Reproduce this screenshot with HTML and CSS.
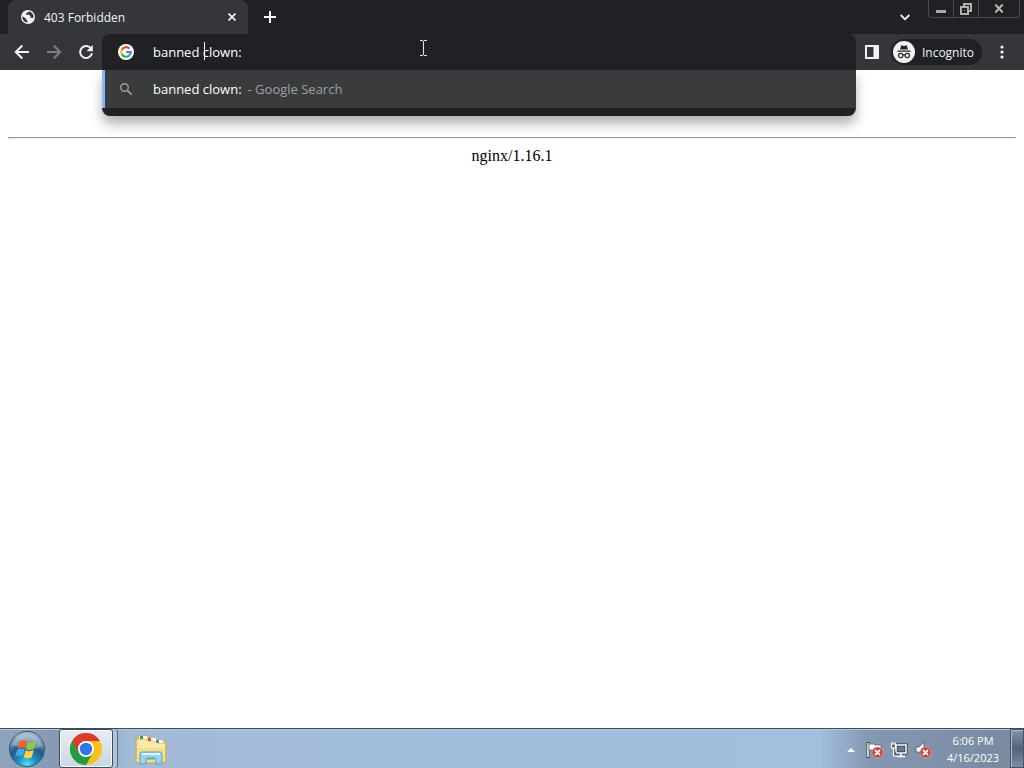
FILE: index.html
```html
<!DOCTYPE html>
<html lang="en">
<head>
    <meta charset="UTF-8" />
    <meta name="viewport" content="width=device-width, initial-scale=1" />
    <title>403 Forbidden</title>
    <link rel="stylesheet" href="styles.css">
</head>
<body>

    <!-- Tab strip -->
    <header class="tab-strip">
        <div class="tab">
            <svg class="tab-icon" width="14" height="14" viewBox="0 0 14 14" aria-hidden="true">
                <circle cx="7" cy="7" r="7" fill="#f1f3f4"/>
                <path d="M1.3 6.3 5 8.6v1l1.4.8v2.2C3.200 12.400 1.200 9.500 1.300 6.300zM7.800 1.500 6.500 2.700 5 3.200v1.500h3.200l1.200 1.500v1.500h1.800l1.200.6C13.300 5 11 1.900 7.800 1.500z" fill="#35363a"/>
            </svg>
            <span class="tab-title">403 Forbidden</span>
            <button class="tab-close" aria-label="Close tab">
                <svg width="8" height="8" viewBox="0 0 8 8"><path d="M.5.5l7 7M7.500.5l-7 7" stroke="#f1f3f4" stroke-width="1.600"/></svg>
            </button>
        </div>
        <button class="new-tab" aria-label="New tab">
            <svg width="12" height="12" viewBox="0 0 12 12"><path d="M6 0v12M0 6h12" stroke="#fff" stroke-width="2"/></svg>
        </button>
        <button class="tab-search" aria-label="Search tabs">
            <svg width="10" height="7" viewBox="0 0 10 7"><path d="M.7 1l4.300 4.300L9.300 1" fill="none" stroke="#f1f3f4" stroke-width="1.800"/></svg>
        </button>
        <div class="window-buttons">
            <button aria-label="Minimize">
                <svg width="10" height="10" viewBox="0 0 10 10"><path d="M0 6h10v3H0z" fill="#aaa"/></svg>
            </button>
            <button aria-label="Restore">
                <svg width="12" height="12" viewBox="0 0 12 12" fill="none" stroke="#b0b0b0"><path d="M4 3V1h7v7H9" stroke-width="2"/><path d="M1 4h7v7H1z" stroke-width="2"/><path d="M4 7h1v1H4z" fill="#b0b0b0" stroke="none"/></svg>
            </button>
            <button class="window-close" aria-label="Close">
                <svg width="10" height="9" viewBox="0 0 10 9"><path d="M1.300.5l7.400 8M8.700.5l-7.400 8" stroke="#b8b8b8" stroke-width="2"/></svg>
            </button>
        </div>
    </header>

    <!-- Toolbar with address bar -->
    <nav class="toolbar">
        <button class="nav-button" aria-label="Back">
            <svg width="16" height="16" viewBox="0 0 16 16" fill="none" stroke="#f1f3f4" stroke-width="2"><path d="M15 8H2.500M8.300 1.500L1.800 8l6.500 6.500"/></svg>
        </button>
        <button class="nav-button" aria-label="Forward">
            <svg width="16" height="16" viewBox="0 0 16 16" fill="none" stroke="#7d7e81" stroke-width="2"><path d="M1 8h12.500M7.700 1.500L14.200 8l-6.500 6.500"/></svg>
        </button>
        <button class="nav-button" aria-label="Reload">
            <svg width="16" height="16" viewBox="0 0 16 16"><path d="M13.200 4.800A6 6 0 1 0 14 9.300" fill="none" stroke="#f1f3f4" stroke-width="2"/><path d="M14.800 1v6.300H8.500z" fill="#f1f3f4"/></svg>
        </button>

        <div class="omnibox">
            <div class="omnibox-row">
                <svg width="16" height="16" viewBox="0 0 16 16" aria-hidden="true">
                    <circle cx="8" cy="8" r="8" fill="#fff"/>
                    <g fill="none" stroke-width="2.200">
                        <path d="M11.400 4.600A4.800 4.800 0 0 0 3.800 5.700" stroke="#ea4335"/>
                        <path d="M3.800 5.700a4.800 4.800 0 0 0 0 4.600" stroke="#fbbc05"/>
                        <path d="M3.800 10.300a4.800 4.800 0 0 0 7.400 1.200" stroke="#34a853"/>
                        <path d="M11.200 11.500A4.800 4.800 0 0 0 12.700 8H8.200" stroke="#4285f4"/>
                    </g>
                </svg>
                <input type="text" class="omnibox-input" value="banned clown:" aria-label="Address and search bar" />
                <span class="caret"></span>
                <svg class="pointer" width="7" height="16" viewBox="0 0 7 16" aria-hidden="true"><path d="M0 .5h3M4 .5h3M0 15.500h3M4 15.500h3M3.500 1v14" fill="none" stroke="#e4e4e4"/></svg>
            </div>
            <div class="suggestions">
                <a class="suggestion" href="#">
                    <svg width="16" height="16" viewBox="0 0 16 16" fill="none" stroke="#9aa0a6" aria-hidden="true"><circle cx="6.500" cy="6.500" r="3.800" stroke-width="1.400"/><path d="M9.300 9.300l4.400 4.400" stroke-width="1.700"/></svg>
                    <span class="suggestion-text">banned clown:</span>
                    <span class="suggestion-source">- Google Search</span>
                </a>
            </div>
        </div>

        <button class="side-panel" aria-label="Side panel">
            <svg width="14" height="14" viewBox="0 0 14 14"><path d="M0 0h14v14H0zM2 2v10h6.500V2z" fill="#f1f3f4" fill-rule="evenodd"/></svg>
        </button>
        <button class="incognito">
            <svg width="22" height="22" viewBox="0 0 22 22" aria-hidden="true">
                <circle cx="11" cy="11" r="11" fill="#f1f3f4"/>
                <path d="M8.300 4.200l2.700.7 2.700-.7L15 8.500H7zM4.500 9.500h13v1.200h-13z" fill="#27282b"/>
                <g fill="none" stroke="#27282b" stroke-width="1.200"><circle cx="7.700" cy="14.500" r="2.200"/><circle cx="14.300" cy="14.500" r="2.200"/><path d="M9.900 14.200q1.100-.8 2.200 0"/></g>
            </svg>
            <span>Incognito</span>
        </button>
        <button class="menu" aria-label="Menu">
            <svg width="4" height="14" viewBox="0 0 4 14" fill="#f1f3f4"><circle cx="2" cy="2" r="1.600"/><circle cx="2" cy="7" r="1.600"/><circle cx="2" cy="12" r="1.600"/></svg>
        </button>
    </nav>

    <!-- Page content -->
    <main class="page">
        <hr>
        <p>nginx/1.16.1</p>
    </main>

    <!-- Taskbar -->
    <footer class="taskbar">
        <button class="start" aria-label="Start">
            <svg width="38" height="38" viewBox="0 0 38 38">
                <defs>
                    <radialGradient id="orb" cx="50%" cy="95%" r="90%">
                        <stop offset="0" stop-color="#4fe6f7"/>
                        <stop offset=".3" stop-color="#1b8fc4"/>
                        <stop offset=".6" stop-color="#235a88"/>
                        <stop offset="1" stop-color="#a9bfd0"/>
                    </radialGradient>
                </defs>
                <circle cx="19" cy="19" r="17.500" fill="url(#orb)" stroke="#34546f"/>
                <path d="M4 16A15.500 15.500 0 0 1 34 16Q27 21 19 18T4 16z" fill="#fff" opacity=".28"/>
                <path d="M11.500 11.500q4-2.500 7.500-.3l-2 7.300q-3.500-2-7.500 0z" fill="#ee6332"/>
                <path d="M20 11.800q4 2 8-.2l-2 7.200q-4 2.200-8 .2z" fill="#93c83f"/>
                <path d="M9.200 19.700q4-2.200 7.500-.1l-2 7q-3.600-2.100-7.500.1z" fill="#44a7e5"/>
                <path d="M17.700 20.200q4 2.100 8-.1l-2 7.100q-4 2.200-8 .1z" fill="#ffd041"/>
            </svg>
        </button>
        <button class="task-chrome" aria-label="Google Chrome">
            <svg width="32" height="32" viewBox="0 0 32 32">
                <circle cx="16" cy="16" r="16" fill="#fbc116"/>
                <path d="M2.140 8A16 16 0 0 0 16 32L22.930 20 16 16z" fill="#259b48"/>
                <path d="M16 8h13.860A16 16 0 0 0 2.140 8l6.930 12z" fill="#db3b2b"/>
                <circle cx="16" cy="16" r="8" fill="#fff"/>
                <circle cx="16" cy="16" r="6.200" fill="#2f75e3"/>
            </svg>
        </button>
        <button class="task-explorer" aria-label="Windows Explorer">
            <svg width="32" height="30" viewBox="0 0 32 30">
                <path d="M1 3h3V1h10v2h2v1h9v2h6v22H1z" fill="#e8ce72" stroke="#c6aa53"/>
                <path d="M2 5h10l2 2h8l1 2h7v18H2z" fill="#f9ecab"/>
                <path d="M4 1h8v3H4zM13 3h8v3h-8zM20 5h8v3h-8z" fill="#fffbe6"/>
                <path d="M5 1h3v3H5z" fill="#3f9a47"/><path d="M13 3h3v3h-3z" fill="#d2532c"/><path d="M21 5h3v3h-3z" fill="#4a8cc4"/>
                <path d="M2 13h28v14H2z" fill="#f5df8c"/>
                <path d="M5 29V19q0-2 2-2h18q2 0 2 2v10h-6v-5H11v5z" fill="#9ed3ed" stroke="#5aa1ca"/>
                <path d="M7 19h18" stroke="#def4fc" stroke-width="2"/>
                <path d="M12 23h8" stroke="#5096bd"/>
            </svg>
        </button>

        <div class="tray">
            <button aria-label="Show hidden icons">
                <svg width="8" height="4" viewBox="0 0 8 4"><path d="M4 0l4 4H0z" fill="#fff"/></svg>
            </button>
            <button aria-label="Action Center">
                <svg width="18" height="18" viewBox="0 0 18 18">
                    <path d="M2 1v16" stroke="#333e4b" stroke-width="3"/><path d="M2 2v14" stroke="#fff" stroke-width="1.500"/>
                    <path d="M3 3h5l1 1h6v7H9L8 9H3z" fill="#fff" stroke="#4b5866" stroke-width=".7"/>
                    <circle cx="11.500" cy="11.500" r="5.500" fill="#cf3d36" stroke="#f0aaa5" stroke-width=".7"/><path d="M9 9l5 5M14 9l-5 5" stroke="#fff" stroke-width="1.800"/>
                </svg>
            </button>
            <button aria-label="Network">
                <svg width="18" height="18" viewBox="0 0 18 18">
                    <path d="M6 4h10v8H6z" fill="#66798d" stroke="#2c3947" stroke-width="3"/><path d="M6 4h10v8H6zM11 12v3M7 15.500h8" fill="none" stroke="#fff" stroke-width="1.500"/>
                    <path d="M1.500 3v4h4V3zM3.500 7v8h4" fill="#52606e" stroke="#fff" stroke-width="1.200"/><path d="M2 1v2M5 1v2" stroke="#fff"/>
                </svg>
            </button>
            <button aria-label="Volume muted">
                <svg width="18" height="18" viewBox="0 0 18 18">
                    <path d="M2 6h3l5-5v15l-5-5H2z" fill="#f5f7f8" stroke="#4b5866" stroke-width=".8"/>
                    <circle cx="11.500" cy="11.500" r="5.500" fill="#cf3d36" stroke="#f0aaa5" stroke-width=".7"/><path d="M9 9l5 5M14 9l-5 5" stroke="#fff" stroke-width="1.800"/>
                </svg>
            </button>
        </div>
        <div class="clock">
            <span>6:06 PM</span>
            <span>4/16/2023</span>
        </div>
        <button class="show-desktop" aria-label="Show desktop"></button>
    </footer>

</body>
</html>
```
FILE: styles.css
```css
* {
    box-sizing: border-box;
}
body {
    display: flex;
    flex-direction: column;
    min-height: 100vh;
    margin: 0;
    background: #fff;
    font-family: "Open Sans", "Noto Sans", sans-serif;
    font-size: 12px;
}
button {
    display: flex;
    align-items: center;
    justify-content: center;
    margin: 0;
    padding: 0;
    border: none;
    background: none;
    color: inherit;
    font: inherit;
}
svg {
    display: block;
    flex: none;
}

/* Tab strip */
.tab-strip {
    display: flex;
    height: 34px;
    padding-left: 8px;
    background: #202124;
    color: #f1f3f4;
}
.tab {
    display: flex;
    align-items: center;
    width: 240px;
    padding: 0 8px 0 13px;
    border-radius: 8px 8px 0 0;
    background: #35363a;
}
.tab-title {
    flex: 1;
    margin-left: 9px;
}
.tab-close {
    width: 16px;
    height: 16px;
}
.new-tab {
    width: 28px;
    margin-left: 8px;
}
.tab-search {
    width: 28px;
    margin-right: 9px;
    margin-left: auto;
}
.window-buttons {
    display: flex;
    height: 18px;
    margin-right: 4px;
    border: 1px solid #4b4c4f;
    border-top: none;
    border-radius: 0 0 4px 4px;
}
.window-buttons button {
    width: 25px;
    border-right: 1px solid #4b4c4f;
}
.window-buttons .window-close {
    width: 40px;
    border-right: none;
}

/* Toolbar */
.toolbar {
    display: flex;
    align-items: center;
    height: 36px;
    padding-left: 6px;
    background: #35363a;
    color: #f1f3f4;
}
.nav-button {
    width: 32px;
    height: 32px;
}
.omnibox {
    position: relative;
    z-index: 1;
    flex: 1;
    height: 36px;
    border-radius: 8px 8px 0 0;
    background: #202124;
    font-size: 13px;
}
.omnibox-row {
    display: flex;
    align-items: center;
    height: 36px;
    padding-left: 16px;
}
.omnibox-input {
    flex: 1;
    min-width: 0;
    margin-left: 19px;
    padding: 0;
    border: none;
    outline: none;
    background: none;
    color: #fff;
    font: inherit;
}
.caret {
    position: absolute;
    top: 8px;
    left: 102px;
    width: 1px;
    height: 18px;
    background: #fff;
}
.pointer {
    position: absolute;
    top: 6px;
    left: 318px;
}
.suggestions {
    position: absolute;
    top: 36px;
    right: 0;
    left: 0;
    padding-bottom: 8px;
    border-radius: 0 0 8px 8px;
    overflow: hidden;
    background: #202124;
    box-shadow: 0 8px 12px rgba(0, 0, 0, 0.3);
}
.suggestion {
    display: flex;
    align-items: center;
    height: 38px;
    padding-left: 13px;
    border-left: 3px solid #8ab4f8;
    background: #3a3b3c;
    color: #fff;
    text-decoration: none;
}
.suggestion-text {
    margin-left: 19px;
}
.suggestion-source {
    margin-left: 6px;
    color: #9aa0a6;
}
.side-panel {
    width: 32px;
    height: 32px;
}
.incognito {
    gap: 7px;
    height: 26px;
    padding: 0 8px 0 2px;
    margin-left: 3px;
    border-radius: 13px;
    background: #202124;
}
.menu {
    width: 24px;
    height: 32px;
    margin: 0 10px 0 8px;
}

/* Page content */
.page {
    flex: 1;
    padding: 67px 8px 8px;
    color: #000;
    font-family: "Liberation Serif", serif;
    font-size: 16px;
    text-align: center;
}
.page hr {
    margin: 0 0 8px;
}
.page p {
    margin: 0;
}

/* Taskbar */
.taskbar {
    display: flex;
    align-items: stretch;
    height: 40px;
    border-top: 1px solid #3b4958;
    background: linear-gradient(to right, #8fa3bd 0, #8799b2 60px, #a2bbd9 130px, #a2bfdd 80%, #8398b1 85%, #78899f 100%);
    box-shadow: inset 0 1px #bccbdc;
    color: #fff;
}
.start {
    width: 38px;
    margin-left: 8px;
}
.task-chrome {
    width: 54px;
    margin-left: 13px;
    border: 1px solid #3e4c5c;
    border-radius: 3px;
    background: linear-gradient(#e8ecf1, #cbd7e4);
    box-shadow: inset 0 0 0 1px #f8fafc, 4px 0 #b1c3d7, 5px 0 #54677c;
}
.task-explorer {
    width: 54px;
    margin-left: 11px;
    padding-top: 3px;
}
.tray {
    display: flex;
    align-items: center;
    gap: 6px;
    margin-left: auto;
    padding-top: 2px;
}
.tray button:first-child {
    width: 18px;
}
.clock {
    display: flex;
    flex-direction: column;
    justify-content: center;
    width: 74px;
    margin-left: 4px;
    font-size: 11px;
    line-height: 17px;
    text-align: center;
}
.show-desktop {
    width: 14px;
    border: 1px solid #43546a;
    background: linear-gradient(#8393a8, #51647c 50%, #7b8ca1);
    box-shadow: inset 1px 1px #adbac8;
}
```
